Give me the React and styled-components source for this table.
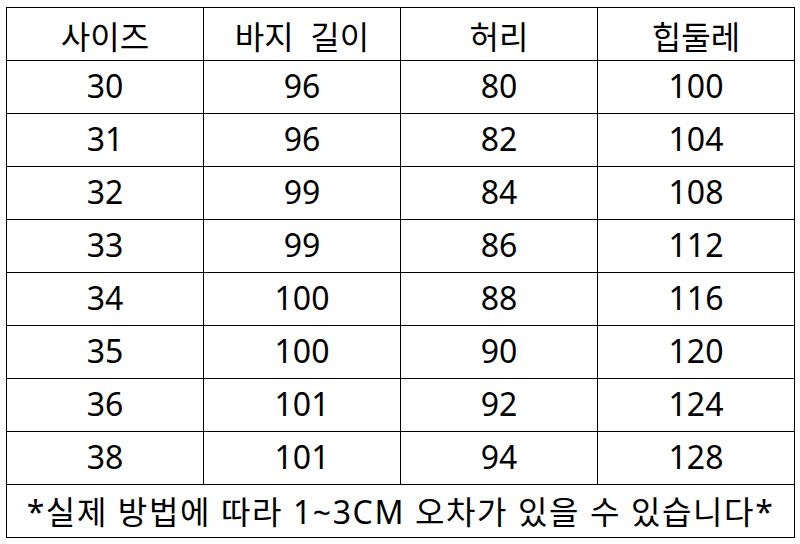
import React from "react";
import styled, { createGlobalStyle } from "styled-components";

const GlobalStyle = createGlobalStyle`
  html, body {
    margin: 0;
    padding: 0;
    background: #ffffff;
  }
  body {
    font-family: "Noto Sans", "Noto Sans CJK KR", sans-serif;
    color: #000000;
  }
`;

const Page = styled.div`
  width: 800px;
  height: 544px;
  box-sizing: border-box;
  padding: 7px 0 0 6px;
  overflow: hidden;
`;

const Grid = styled.div`
  display: grid;
  grid-template-columns: repeat(4, 197px);
  grid-auto-rows: 53px;
  width: max-content;
  border-left: 1px solid #000;
  border-top: 1px solid #000;
`;

const Cell = styled.div`
  box-sizing: border-box;
  display: flex;
  align-items: center;
  justify-content: center;
  border-right: 1px solid #000;
  border-bottom: 1px solid #000;
  font-size: 32px;
  line-height: 1;
  white-space: pre;
  padding-top: ${(p) => (p.$head ? "6px" : "0")};
  padding-bottom: ${(p) => (p.$head ? "0" : "3px")};
`;

const NoteCell = styled(Cell)`
  grid-column: 1 / -1;
  letter-spacing: 1.6px;
  padding-top: 2px;
  padding-bottom: 0;
`;

const headers = ["사이즈", "바지  길이", "허리", "힙둘레"];
const rows = [
  [30, 96, 80, 100],
  [31, 96, 82, 104],
  [32, 99, 84, 108],
  [33, 99, 86, 112],
  [34, 100, 88, 116],
  [35, 100, 90, 120],
  [36, 101, 92, 124],
  [38, 101, 94, 128],
];

export default function App() {
  return (
    <>
      <GlobalStyle />
      <Page>
        <Grid>
          {headers.map((h) => (
            <Cell key={h} $head>
              {h}
            </Cell>
          ))}
          {rows.map((r, i) =>
            r.map((v, j) => <Cell key={`${i}-${j}`}>{v}</Cell>)
          )}
          <NoteCell>*실제 방법에 따라 1~3CM 오차가 있을 수 있습니다*</NoteCell>
        </Grid>
      </Page>
    </>
  );
}
